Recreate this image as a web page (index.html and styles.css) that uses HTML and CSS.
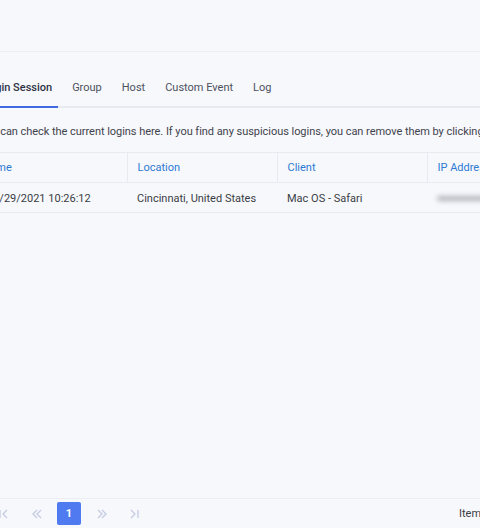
FILE: index.html
```
<!DOCTYPE html>
<html lang="en">

<head>
    <meta charset="UTF-8">
    <meta name="viewport" content="width=device-width, initial-scale=1.0">
    <title>Login Session</title>

    <link rel="stylesheet" href="styles.css">

</head>

<body>
    <div class="topbar"></div>

    <div class="main">
        <ul class="tabs">
            <li class="tab active">Login Session</li>
            <li class="tab">Group</li>
            <li class="tab">Host</li>
            <li class="tab">Custom Event</li>
            <li class="tab">Log</li>
        </ul>

        <p class="desc">You can check the current logins here. If you find any suspicious logins, you can remove them by clicking the button on the right.</p>

        <table class="sessions">
            <thead>
                <tr>
                    <th>Time</th>
                    <th>Location</th>
                    <th>Client</th>
                    <th>IP Address</th>
                </tr>
            </thead>
            <tbody>
                <tr>
                    <td>01/29/2021 10:26:12</td>
                    <td>Cincinnati, United States</td>
                    <td>Mac OS - Safari</td>
                    <td><span class="blur"></span></td>
                </tr>
            </tbody>
        </table>
    </div>

    <div class="pager">
        <div class="pages">
            <span class="pg">
                <svg width="12" height="12" viewBox="0 0 12 12"><path d="M2 2v8M9 2L5 6l4 4" /></svg>
            </span>
            <span class="pg">
                <svg width="12" height="12" viewBox="0 0 12 12"><path d="M6 2L2 6l4 4M10 2L6 6l4 4" /></svg>
            </span>
            <span class="pg current">1</span>
            <span class="pg">
                <svg width="12" height="12" viewBox="0 0 12 12"><path d="M2 2l4 4-4 4M6 2l4 4-4 4" /></svg>
            </span>
            <span class="pg">
                <svg width="12" height="12" viewBox="0 0 12 12"><path d="M3 2l4 4-4 4M10 2v8" /></svg>
            </span>
        </div>
        <div class="per-page">Items per page: 10</div>
    </div>
</body>

</html>
```

FILE: styles.css
```
* {
    margin: 0;
    padding: 0;
    list-style: none;
    box-sizing: border-box;
}

html,
body {
    width: 480px;
    height: 528px;
    overflow: hidden;
}

body {
    background: #f7f8fc;
    font-family: Roboto, "Liberation Sans", sans-serif;
    color: #3a3d45;
    position: relative;
}

.topbar {
    height: 52px;
    border-bottom: 1px solid #eceef4;
}

.main {
    width: 700px;
    margin-left: -23px;
}

.tabs {
    display: flex;
    gap: 8px;
    margin-top: 18px;
    border-bottom: 2px solid #e8eaf1;
}

.tab {
    height: 38px;
    line-height: 36px;
    padding: 0 6px;
    font-size: 11px;
    color: #4d515c;
    border-bottom: 2px solid transparent;
    margin-bottom: -2px;
}

.tab.active {
    color: #2f3344;
    font-weight: 500;
    border-bottom-color: #4169e1;
}

.desc {
    margin-top: 16px;
    padding-left: 2px;
    font-size: 11px;
    line-height: 16px;
    letter-spacing: -0.04px;
    color: #3f434c;
    white-space: nowrap;
}

.sessions {
    margin-top: 12px;
    width: 600px;
    table-layout: fixed;
    border-collapse: collapse;
    font-size: 11px;
}

.sessions th,
.sessions td {
    height: 30px;
    padding: 0 10px;
    text-align: left;
    white-space: nowrap;
    overflow: hidden;
    border-top: 1px solid #e8eaf0;
    border-bottom: 1px solid #e8eaf0;
}

.sessions th {
    font-weight: 400;
    color: #2d7ad3;
    border-left: 1px solid #e8eaf0;
}

.sessions th:first-child {
    border-left: none;
}

.sessions td {
    color: #3a3d45;
    padding-top: 1px;
}

.blur {
    display: inline-block;
    width: 50px;
    height: 5px;
    background: #b3b5ba;
    border-radius: 3px;
    filter: blur(2.5px);
    vertical-align: middle;
}

.pager {
    position: absolute;
    left: 0;
    bottom: 0;
    width: 640px;
    height: 30px;
    border-top: 1px solid #eceef4;
    display: flex;
    align-items: center;
    margin-left: -8px;
}

.pages {
    display: flex;
    align-items: center;
    gap: 8.5px;
}

.pg {
    width: 24px;
    height: 23px;
    display: flex;
    align-items: center;
    justify-content: center;
}

.pg svg {
    fill: none;
    stroke: #c5cbe2;
    stroke-width: 1.3;
}

.pg.current {
    background: #4f7af0;
    color: white;
    border-radius: 2px;
    font-size: 11px;
    font-weight: 700;
}

.per-page {
    margin-left: 313px;
    font-size: 11px;
    color: #3a3d45;
}
```
